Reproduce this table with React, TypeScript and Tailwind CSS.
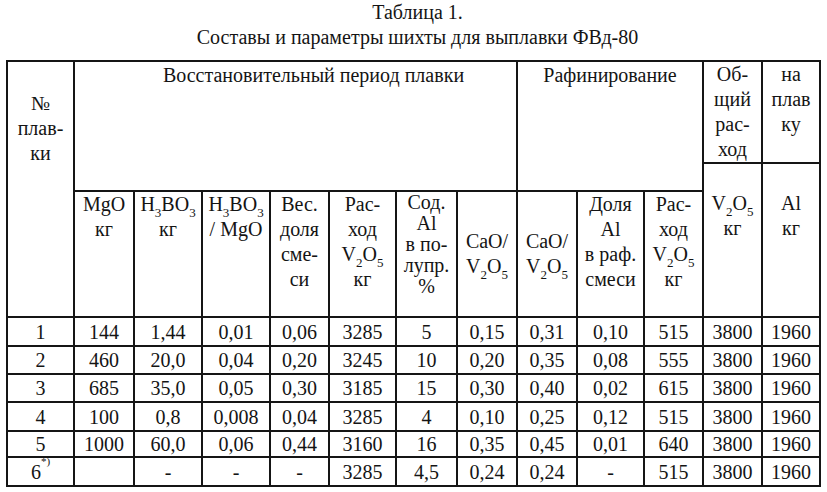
import React from "react";

const V2O5 = (
  <>
    V<sub className="text-[13px] align-[-3px] leading-none">2</sub>O
    <sub className="text-[13px] align-[-3px] leading-none">5</sub>
  </>
);
const H3BO3 = (
  <>
    H<sub className="text-[13px] align-[-3px] leading-none">3</sub>BO
    <sub className="text-[13px] align-[-3px] leading-none">3</sub>
  </>
);

const rows: string[][] = [
  ["1", "144", "1,44", "0,01", "0,06", "3285", "5", "0,15", "0,31", "0,10", "515", "3800", "1960"],
  ["2", "460", "20,0", "0,04", "0,20", "3245", "10", "0,20", "0,35", "0,08", "555", "3800", "1960"],
  ["3", "685", "35,0", "0,05", "0,30", "3185", "15", "0,30", "0,40", "0,02", "615", "3800", "1960"],
  ["4", "100", "0,8", "0,008", "0,04", "3285", "4", "0,10", "0,25", "0,12", "515", "3800", "1960"],
  ["5", "1000", "60,0", "0,06", "0,44", "3160", "16", "0,35", "0,45", "0,01", "640", "3800", "1960"],
  ["6", "", "-", "-", "-", "3285", "4,5", "0,24", "0,24", "-", "515", "3800", "1960"],
];
const rowHeights = ["h-[29px]", "h-[28px]", "h-[28px]", "h-[29px]", "h-[26px]", "h-[29px]"];
const widths = [67, 60, 68, 68, 59, 67, 61, 60, 60, 67, 59, 59, 58];

const cell = "border-2 border-[#151515] p-0 text-center";

export default function App() {
  return (
    <div
      className="w-[827px] h-[492px] bg-white text-[#141414] text-[20px] overflow-hidden"
      style={{ fontFamily: '"Liberation Serif", "Times New Roman", serif' }}
    >
      <div className="text-center leading-[25px] pl-[8px]">
        <div>Таблица 1.</div>
        <div>Составы и параметры шихты для выплавки ФВд-80</div>
      </div>
      <table className="ml-[6px] mt-[10px] border-collapse table-fixed w-[814px]">
        <colgroup>
          {widths.map((w, i) => (
            <col key={i} style={{ width: w }} />
          ))}
        </colgroup>
        <tbody>
          <tr className="h-[98px]">
            <td rowSpan={3} className={`${cell} align-top pt-[29px] leading-[25px]`}>
              №<br />плав-<br />ки
            </td>
            <td colSpan={7} rowSpan={2} className={`${cell} align-top pl-[36px] leading-[26px]`}>
              Восстановительный период плавки
            </td>
            <td colSpan={3} rowSpan={2} className={`${cell} align-top leading-[26px]`}>
              Рафинирование
            </td>
            <td className={`${cell} align-top leading-[25px]`}>
              Об-<br />щий<br />рас-<br />ход
            </td>
            <td className={`${cell} align-top leading-[25px]`}>
              на<br />плав<br />ку
            </td>
          </tr>
          <tr className="h-[28px]">
            <td rowSpan={2} className={`${cell} align-top pt-[27px] leading-[25px]`}>
              {V2O5}
              <br />
              кг
            </td>
            <td rowSpan={2} className={`${cell} align-top pt-[27px] leading-[25px]`}>
              Al
              <br />
              кг
            </td>
          </tr>
          <tr className="h-[126px]">
            <td className={`${cell} align-top leading-[25px]`}>
              MgO<br />кг
            </td>
            <td className={`${cell} align-top leading-[25px]`}>
              {H3BO3}
              <br />
              кг
            </td>
            <td className={`${cell} align-top leading-[25px]`}>
              {H3BO3}
              <br />/ MgO
            </td>
            <td className={`${cell} align-top leading-[25px]`}>
              Вес.<br />доля<br />сме-<br />си
            </td>
            <td className={`${cell} align-top leading-[25px]`}>
              Рас-<br />ход<br />
              {V2O5}
              <br />
              кг
            </td>
            <td className={`${cell} align-top leading-[21px]`}>
              Сод.<br />Al<br />в по-<br />лупр.<br />%
            </td>
            <td className={`${cell} align-middle leading-[25px]`}>
              CaO/<br />
              {V2O5}
            </td>
            <td className={`${cell} align-middle leading-[25px]`}>
              CaO/<br />
              {V2O5}
            </td>
            <td className={`${cell} align-top leading-[25px]`}>
              Доля<br />Al<br />в раф.<br />смеси
            </td>
            <td className={`${cell} align-top leading-[25px]`}>
              Рас-<br />ход<br />
              {V2O5}
              <br />
              кг
            </td>
          </tr>
          {rows.map((r, ri) => (
            <tr key={ri} className={rowHeights[ri]}>
              {r.map((v, ci) => (
                <td key={ci} className={`${cell} align-middle leading-[22px]`}>
                  {ri === 5 && ci === 0 ? (
                    <>
                      6<sup className="text-[11px] leading-none align-[8px]">*)</sup>
                    </>
                  ) : (
                    v
                  )}
                </td>
              ))}
            </tr>
          ))}
        </tbody>
      </table>
    </div>
  );
}
